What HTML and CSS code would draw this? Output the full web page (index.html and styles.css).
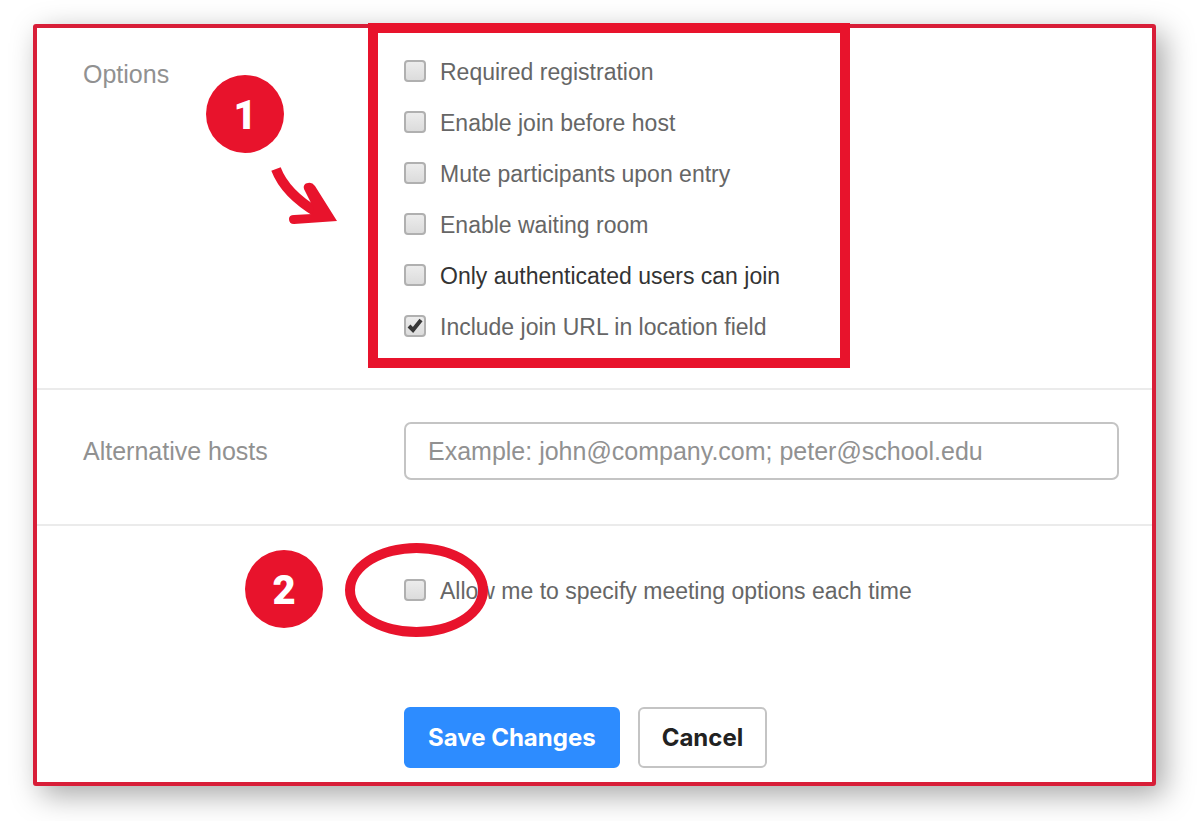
FILE: index.html
```
<!DOCTYPE html>
<html lang="en">
	<head>
		<meta charset="utf-8">
		<title>Meeting Options</title>
		<link rel="stylesheet" href="styles.css">
	</head>
	<body>
		<form class="panel">
			<div class="row options-row" role="group" aria-labelledby="options-label">
				<div class="row-label" id="options-label">Options</div>
				<div class="options">
					<label class="option"><input type="checkbox">Required registration</label>
					<label class="option"><input type="checkbox">Enable join before host</label>
					<label class="option"><input type="checkbox">Mute participants upon entry</label>
					<label class="option"><input type="checkbox">Enable waiting room</label>
					<label class="option dark"><input type="checkbox">Only authenticated users can join</label>
					<label class="option"><input type="checkbox" checked>Include join URL in location field</label>
					<div class="highlight-box"></div>
				</div>
				<span class="badge badge-one">1</span>
				<svg class="arrow" viewBox="0 0 70 62" width="70" height="62" aria-hidden="true">
					<path d="M8 4C14 20 28 35 50 48" fill="none" stroke="#e8132c" stroke-width="10"/>
					<path d="M37 26C34 21 37 18 40 18Q44 17 47 21L69 56L26 59Q21 59 21 54Q21 50 26 50L44 49L46 44Z" fill="#e8132c"/>
				</svg>
			</div>
			<div class="row hosts-row">
				<label class="row-label" for="hosts">Alternative hosts</label>
				<input class="hosts" id="hosts" type="text" placeholder="Example: john@company.com; peter@school.edu">
			</div>
			<div class="row specify-row">
				<div class="specify">
					<label class="option"><input type="checkbox">Allow me to specify meeting options each time</label>
					<div class="highlight-oval"></div>
				</div>
				<span class="badge badge-two">2</span>
			</div>
			<div class="row buttons-row">
				<div class="buttons">
					<button class="btn btn-primary" type="button">Save Changes</button>
					<button class="btn" type="button">Cancel</button>
				</div>
			</div>
		</form>
	</body>
</html>
```
FILE: styles.css
```
* {
	box-sizing: border-box;
}

body {
	margin: 0;
	padding: 24px 44px 35px 33px;
	background-color: #fff;
	color: #666;
	font-family: "Liberation Sans", Arial, sans-serif;
	font-size: 23px;
}

.panel {
	border: 4px solid #d81e38;
	border-radius: 3px;
	background-color: #fff;
	box-shadow: 8px 9px 30px rgba(0, 0, 0, 0.35);
}

.row {
	position: relative;
	display: grid;
	grid-template-columns: 321px 1fr;
	padding: 0 33px 0 46px;
}

.row-label {
	color: #919191;
	font-size: 25px;
	line-height: 54px;
}

.options-row {
	padding-top: 19px;
	padding-bottom: 35px;
	border-bottom: 2px solid #ebebeb;
}

.options {
	position: relative;
	justify-self: start;
	width: 410px;
}

.option {
	display: flex;
	align-items: center;
	gap: 14px;
	height: 51px;
	white-space: nowrap;
}
.option.dark {
	color: #333;
}
.option input {
	appearance: none;
	flex: none;
	width: 22px;
	height: 22px;
	margin: 0 0 3px;
	border: 2px solid #b0b0b0;
	border-radius: 4px;
	background: linear-gradient(#ececec, #dcdcdc);
}
.option input:checked {
	background: url("data:image/svg+xml,%3Csvg xmlns='http://www.w3.org/2000/svg' viewBox='0 0 18 18'%3E%3Cpath d='M3 9L7 13L15 3' fill='none' stroke='%23383838' stroke-width='4'/%3E%3C/svg%3E"), linear-gradient(#ececec, #dcdcdc);
}

.highlight-box {
	position: absolute;
	inset: -24px -36px -15px;
	border: 10px solid #e8132c;
	pointer-events: none;
}

.badge {
	position: absolute;
	width: 78px;
	height: 78px;
	border-radius: 50%;
	background-color: #e8132c;
	color: #fff;
	font-family: Roboto, sans-serif;
	font-size: 40px;
	font-weight: 900;
	line-height: 82px;
	text-align: center;
}
.badge-one {
	top: 47px;
	left: 169px;
}
.badge-two {
	top: 24px;
	left: 208px;
}

.arrow {
	position: absolute;
	top: 137px;
	left: 231px;
}

.hosts-row {
	align-items: center;
	padding-top: 32px;
	padding-bottom: 44px;
	border-bottom: 2px solid #ebebeb;
}

.hosts {
	width: 100%;
	height: 58px;
	padding: 0 22px;
	border: 2px solid #c4c4c4;
	border-radius: 7px;
	background-color: #fff;
	color: #333;
	font: inherit;
	font-size: 25px;
}
.hosts::placeholder {
	color: #919191;
}

.specify-row {
	padding-top: 40px;
}

.specify {
	position: relative;
	grid-column: 2;
}

.highlight-oval {
	position: absolute;
	top: -23px;
	left: -59px;
	width: 143px;
	height: 94px;
	border: 10px solid #e8132c;
	border-radius: 50%;
	pointer-events: none;
}

.buttons-row {
	padding-top: 90px;
	padding-bottom: 14px;
}

.buttons {
	grid-column: 2;
	display: flex;
	gap: 18px;
}

.btn {
	height: 61px;
	padding: 0 22px;
	border: 2px solid #c4c4c4;
	border-radius: 6px;
	background-color: #fff;
	color: #222;
	font-family: Inter, sans-serif;
	font-size: 24px;
	font-weight: 700;
}
.btn-primary {
	border-color: #2d8cff;
	background-color: #2d8cff;
	color: #fff;
}
```
